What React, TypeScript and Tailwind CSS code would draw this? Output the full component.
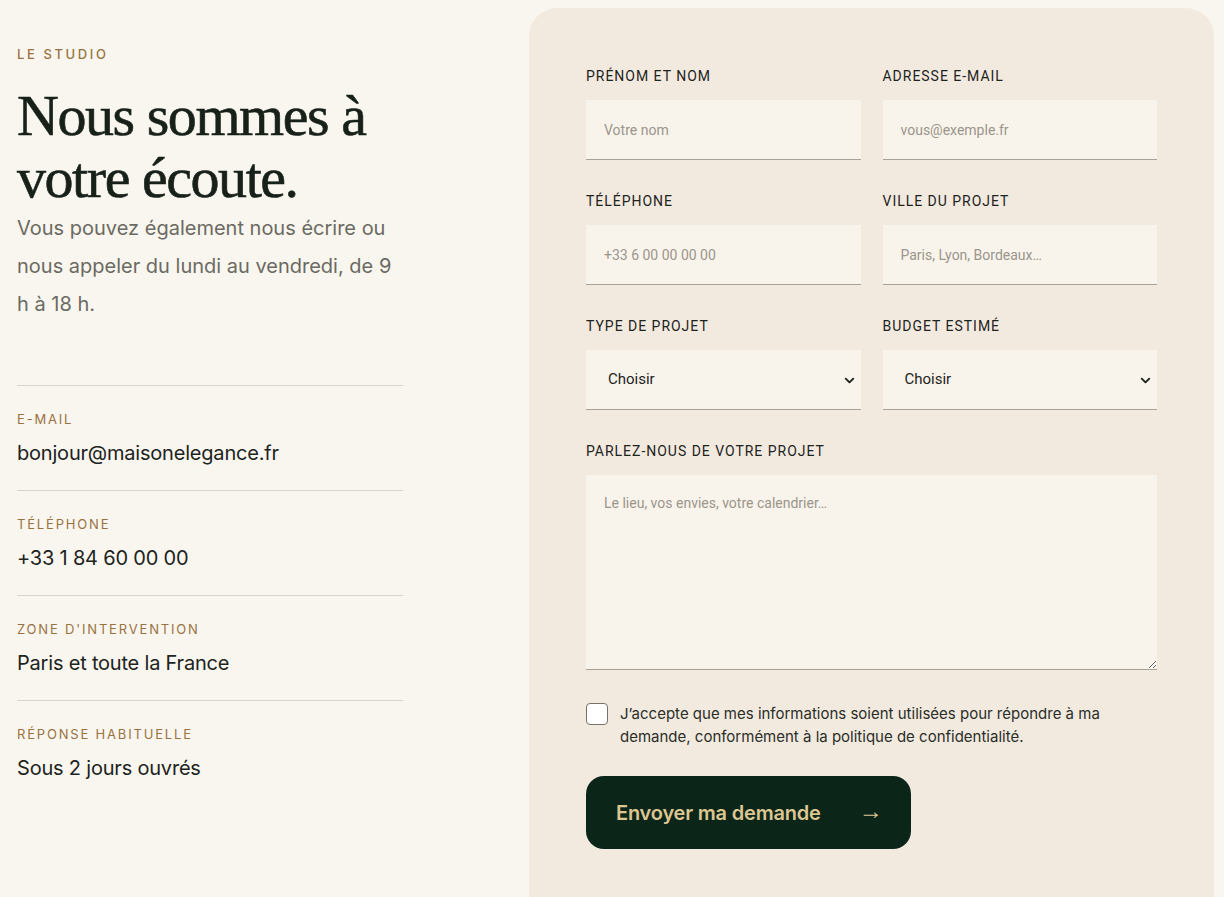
import { ChevronDown } from 'lucide-react';

const infos = [
  { label: 'E-mail', value: 'bonjour@maisonelegance.fr' },
  { label: 'Téléphone', value: '+33 1 84 60 00 00' },
  { label: "Zone d'intervention", value: 'Paris et toute la France' },
  { label: 'Réponse habituelle', value: 'Sous 2 jours ouvrés' },
];

function Field({ label, placeholder }: { label: string; placeholder: string }) {
  return (
    <div>
      <label className="block text-[14px] tracking-[0.07em] uppercase text-[#1d231d] mb-[14px] leading-[20px]">{label}</label>
      <input
        type="text"
        placeholder={placeholder}
        className="w-full h-[60px] px-[18px] bg-[#f9f4eb] border-b border-[#a8a197] text-[14px] text-[#1d231d] placeholder:text-[#9b958b] focus:outline-none"
      />
    </div>
  );
}

function SelectField({ label }: { label: string }) {
  return (
    <div>
      <label className="block text-[14px] tracking-[0.07em] uppercase text-[#1d231d] mb-[14px] leading-[20px]">{label}</label>
      <div className="relative">
        <select className="w-full h-[60px] pl-[22px] pr-10 appearance-none bg-[#f9f4eb] border-b border-[#a8a197] text-[15px] text-[#1d231d] focus:outline-none">
          <option>Choisir</option>
        </select>
        <ChevronDown className="absolute right-[4px] top-[23px] w-[15px] h-[15px] text-[#1d231d] pointer-events-none" strokeWidth={3} />
      </div>
    </div>
  );
}

export default function App() {
  return (
    <div className="min-h-[897px] bg-[#f9f6ef] font-['Inter','Noto_Sans',sans-serif] text-[#1d231d] overflow-hidden">
      <div className="flex items-start pt-[8px] pl-[17px] pr-[10px] gap-[126px]">
        {/* Left column */}
        <div className="w-[386px] shrink-0 pt-[37px]">
          <div className="text-[13px] tracking-[0.2em] uppercase text-[#9a7242] font-medium leading-[18px]">Le studio</div>
          <h1 className="mt-[22px] font-['Liberation_Serif',serif] text-[58px] leading-[62px] tracking-[-0.025em] text-[#17211a] [-webkit-text-stroke:0.6px_#17211a]">
            Nous sommes à votre écoute.
          </h1>
          <p className="mt-[0px] text-[20px] leading-[38px] text-[#6b6a62]">
            Vous pouvez également nous écrire ou nous appeler du lundi au vendredi, de 9 h à 18 h.
          </p>
          <div className="mt-[62px]">
            {infos.map((i) => (
              <div key={i.label} className="border-t border-[#d9d3c8] pt-[24px] h-[105px]">
                <div className="text-[13px] tracking-[0.14em] uppercase text-[#9a7242] leading-[18px]">{i.label}</div>
                <div className="mt-[11px] text-[20px] leading-[28px] text-[#1d231d] tracking-[-0.01em]">{i.value}</div>
              </div>
            ))}
          </div>
        </div>

        {/* Form card */}
        <div className="flex-1 bg-[#f3eadf] rounded-[28px] px-[57px] pt-[58px] pb-[48px] min-h-[920px]">
          <div className="grid grid-cols-2 gap-x-[22px] gap-y-[31px] font-['Roboto',sans-serif]">
            <Field label="Prénom et nom" placeholder="Votre nom" />
            <Field label="Adresse e-mail" placeholder="vous@exemple.fr" />
            <Field label="Téléphone" placeholder="+33 6 00 00 00 00" />
            <Field label="Ville du projet" placeholder="Paris, Lyon, Bordeaux…" />
            <SelectField label="Type de projet" />
            <SelectField label="Budget estimé" />
            <div className="col-span-2">
              <label className="block text-[14px] tracking-[0.07em] uppercase text-[#1d231d] mb-[14px] leading-[20px]">Parlez-nous de votre projet</label>
              <textarea
                placeholder="Le lieu, vos envies, votre calendrier…"
                className="block w-full h-[195px] px-[18px] py-[18px] bg-[#f9f4eb] border-b border-[#a8a197] text-[14px] placeholder:text-[#9b958b] focus:outline-none"
              />
            </div>
          </div>

          <label className="mt-[32px] flex items-start gap-[12px]">
            <span className="mt-[1px] w-[22px] h-[22px] shrink-0 rounded-[4px] border-[1.5px] border-[#77736b] bg-white" />
            <span className="text-[15px] leading-[23px] text-[#2a2e28]">
              J’accepte que mes informations soient utilisées pour répondre à ma demande, conformément à la politique de confidentialité.
            </span>
          </label>

          <button className="mt-[28px] h-[73px] w-[325px] rounded-[18px] bg-[#0c2519] flex items-center pl-[30px] gap-[38px] text-[20px] font-semibold tracking-[-0.01em] text-[#dcc692]">
            <span>Envoyer ma demande</span>
            <span className="font-['Liberation_Sans',sans-serif] text-[24px] font-normal leading-none -mt-[4px]">→</span>
          </button>
        </div>
      </div>
    </div>
  );
}
